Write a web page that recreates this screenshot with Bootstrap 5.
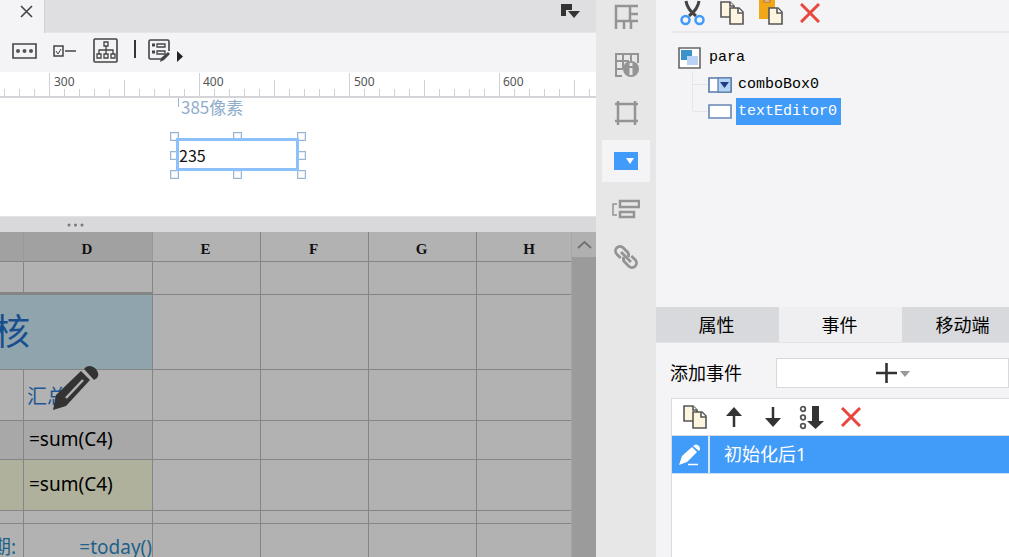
<!DOCTYPE html>
<html lang="zh-CN">
<head>
<meta charset="utf-8">
<meta name="viewport" content="width=device-width, initial-scale=1">
<title>Report designer</title>
<link href="https://cdn.jsdelivr.net/npm/bootstrap@5.3.0/dist/css/bootstrap.min.css" rel="stylesheet">
<style>
  :root { --ink:#333; --panel:#f4f4f6; --accent:#419bf9; --handle:#9ab5d2; }
  body { font-family:"Noto Sans","Noto Sans CJK SC",sans-serif; color:#000; background:var(--panel); }
  button { font:inherit; color:inherit; background:none; border:0; padding:0; }
  svg { display:block; flex:none; }

  /* designer column */
  .doc-tabs, .tools, .ruler, .stage, .splitter { flex:none; }
  .doc-tabs { height:33px; background:#dfdfe1; border-bottom:1px solid #e6e6e8; }
  .doc-tab { width:45px; height:33px; background:var(--panel); border-right:1px solid #d0d0d4; padding:5px 11px 0 0; }
  .tools { height:39px; padding:0 12px; }
  .ruler { height:26px; background:#fff; border-bottom:2px solid #d3d3d8; }
  .ruler-tag { position:absolute; top:1px; font-size:12px; line-height:18px; color:#555; }
  .stage { height:118px; background:#fff; }
  .size-tip { position:absolute; left:178px; top:0; font:17px/17px "Noto Sans CJK SC",sans-serif; color:#8fadca; padding-left:3px; }
  .size-tip::before { content:""; position:absolute; left:0; top:0; width:1px; height:9px; background:var(--handle); }
  .widget { position:absolute; left:176px; top:40px; width:123px; height:33px; }
  .widget input { width:100%; height:100%; border:3px solid #8dc1fb; border-radius:0; padding:0; outline:0; color:#111; background:#fff; font:16px "Noto Sans CJK SC",sans-serif; }
  .grip { position:absolute; width:9px; height:9px; border:1px solid var(--handle); background:#fff; box-shadow:inset 0 0 0 1px #e3ebf4; }
  .g-l { left:-6px; } .g-m { left:57px; } .g-r { right:-7px; }
  .g-t { top:-6px; } .g-c { top:13px; } .g-b { bottom:-8px; }
  .splitter { height:16px; background:#d9d9db; border-top:1px solid #e3e3e5; }
  .splitter svg { margin:6px 0 0 67px; }

  /* spreadsheet */
  .sheet { min-height:0; background:#b2b2b2; }
  .cells { table-layout:fixed; width:100%; border-collapse:separate; border-spacing:0; }
  .cells th, .cells td { padding:0 0 0 5px; border-right:1px solid #858585; border-bottom:1px solid #858585; white-space:nowrap; overflow:hidden; vertical-align:middle; font-size:19px; line-height:24px; }
  .cells th { padding:4px 2px 0 0; text-align:center; font:bold 15px/20px "Liberation Serif",serif; color:#111; }
  .cells th:last-child { padding-left:12px; }
  .cells th:last-child, .cells td:last-child { border-right:0; }
  .cells .on { background:#a1a1a1; border-right-color:#999; }
  .cells td.top-edge { border-bottom:3px solid #858585; padding:0; }
  .cells .headline { background:#8fa4ad; padding:0; }
  .headline div { width:30px; font-size:36px; line-height:48px; color:#174f8e; }
  .cells .gray { background:#a8a8a8; padding-bottom:3px; }
  .cells .olive { background:#b0b19d; padding-bottom:3px; }
  .cells .label-blue { font-size:20px; color:#1f5793; padding:3px 0 0 3px; }
  .cells .foot { color:#1f6188; text-align:right; padding:0; }
  .foot div { width:16px; }
  .pencil { position:absolute; left:52px; top:132px; }
  .scroller { width:25px; flex:none; background:#9b9b9b; border-left:1px solid #a6a6a6; }
  .scroller button { height:25px; width:100%; background:#b0b0b0; }

  /* icon rail */
  .rail { width:60px; flex:none; background:#e7e7e7; overflow:hidden; }
  .rail button { width:48px; height:42px; flex:none; color:#949494; }
  .rail .current { background:var(--panel); }
  .rail div { gap:6px; margin-top:-4px; }

  /* inspector */
  .inspector { flex:0 0 353px; background:var(--panel); overflow:hidden; }
  .tree-pane { height:307px; flex:none; }
  .icon-bar button { width:39px; height:26px; }
  .tree-bar { height:33px; margin-left:15px; padding-left:2px; border-bottom:2px solid #e8e8eb; }
  .tree { margin:11px 0 0 22px; font:15px/27px "Liberation Mono",monospace; }
  .tree li { height:27px; }
  .tree ul { margin-left:14px; }
  .tree ul li::before { content:""; width:15px; height:1px; background:#e6e6e9; }
  .tree ul li { border-left:1px solid #e6e6e9; }
  .tree ul li:last-child { border-image:linear-gradient(#e6e6e9 50%, transparent 50%) 1; }
  .tree ul span { padding:0 4px 0 2px; margin-left:4px; }
  .picked { background:var(--accent); color:#fff; }
  .pane-tabs button { width:123px; height:36px; flex:none; font-size:18px; padding:2px 2px 0 0; background:#d8d9dc; border-bottom:1px solid #e4e4e7; }
  .pane-tabs .current { background:#efeff1; }
  .add-row { padding:15px 0 10px 14px; font-size:18px; }
  .add-btn { height:30px; background:#fff; border:1px solid #d9d9dc; margin-left:34px; padding-left:1px; }
  .events { margin-left:15px; background:#fff; border:solid #dcdcdf; border-width:1px 0 0 1px; }
  .events .icon-bar { height:37px; padding-left:3px; border-bottom:1px solid #dcdcdf; }
  .event-item { height:38px; background:var(--accent); color:#fff; font-size:18px; border-bottom:1px solid #c9dff6; }
  .event-item span { border-right:2px solid #d6e8fc; width:38px; height:37px; }
  .event-item div { padding-left:14px; }
</style>
</head>
<body>
<svg width="0" height="0" class="position-absolute" aria-hidden="true">
  <defs>
    <symbol id="pages" viewBox="0 0 26 26">
      <g fill="#fdf5df" stroke="#555" stroke-width="1.6">
        <path d="M2 2h9l4 4v11H2z"/><path d="M11 2v4h4" fill="#fff"/>
        <path d="M11 8h9l4 4v12H11z"/><path d="M19 8v5h5" fill="#fff"/>
      </g>
    </symbol>
    <symbol id="cross" viewBox="0 0 20 20"><path d="M1 1L19 19M19 1L1 19" stroke="#e8463e" stroke-width="3" fill="none"/></symbol>
  </defs>
</svg>

<div class="d-flex vh-100 overflow-hidden">
  <main class="d-flex flex-column flex-grow-1 overflow-hidden">
    <div class="doc-tabs d-flex justify-content-between align-items-start">
      <div class="doc-tab d-flex justify-content-end align-items-start">
        <button type="button" aria-label="Close tab"><svg width="13" height="13"><path d="M1 1l11 11M12 1L1 12" stroke="#444" stroke-width="1.6"/></svg></button>
      </div>
      <button type="button" class="me-3 pt-1" aria-label="Tab list"><svg width="19" height="16"><path d="M0 0h11v6H5v6H0z" fill="#333"/><path d="M7 7h12l-6 7z" fill="#333"/></svg></button>
    </div>

    <div class="tools d-flex align-items-center">
      <button type="button" aria-label="Text widget"><svg width="25" height="20"><path d="M1 1h23v14H1z" fill="none" stroke="#444" stroke-width="1.6"/><g fill="#555"><circle cx="6" cy="8" r="2"/><circle cx="12.500" cy="8" r="2"/><circle cx="19" cy="8" r="2"/></g></svg></button>
      <button type="button" class="ms-3" aria-label="Check box"><svg width="23" height="16"><path d="M1 1h9v10H1zM12 6h11" fill="none" stroke="#444" stroke-width="1.5"/><path d="M3 6l2 3 3-5" fill="none" stroke="#444"/></svg></button>
      <button type="button" class="ms-3" aria-label="Tree"><svg width="30" height="30"><rect x="2" y="1" width="23" height="23" rx="1" fill="none" stroke="#444" stroke-width="1.6"/><path d="M12 4h4v4h-4zM5 16h4v4H5zM12 16h4v4h-4zM19 16h4v4h-4zM14 8v8M7 16v-4h14v4" fill="none" stroke="#444" stroke-width="1.3"/></svg></button>
      <svg class="ms-2 ps-1" width="6" height="32"><path d="M1 3v18" stroke="#333" stroke-width="2"/></svg>
      <button type="button" class="ms-2 ps-1" aria-label="Edit form"><svg width="36" height="28"><path d="M15 20H2.500q-1.500 0-1.500-1.500V2.500q0-1.500 1.500-1.500h17q1.500 0 1.500 1.500V12" fill="none" stroke="#444" stroke-width="1.6"/><path d="M4 6h3M4 13h3" stroke="#444" stroke-width="3"/><path d="M9 5h8v3H9zM9 12h8v3H9z" fill="none" stroke="#444" stroke-width="1.3"/><path d="M12 23l1-4 7-6 2 2-6 6z" fill="#444"/><path d="M29 12l6 5.500-6 5.500z" fill="#222"/></svg></button>
    </div>

    <div class="ruler position-relative overflow-hidden">
      <svg width="100%" height="24">
        <defs><pattern id="ticks" x="49" width="150" height="24" patternUnits="userSpaceOnUse">
          <path d="M.5 1v23M75.500 8v16M15.500 17v7M30.500 17v7M45.500 17v7M60.500 17v7M90.500 17v7M105.500 17v7M120.500 17v7M135.500 17v7" stroke="#d0d0d6"/>
        </pattern></defs>
        <rect width="100%" height="24" fill="url(#ticks)"/>
      </svg>
      <span class="ruler-tag" style="left:54px">300</span>
      <span class="ruler-tag" style="left:203px">400</span>
      <span class="ruler-tag" style="left:354px">500</span>
      <span class="ruler-tag" style="left:503px">600</span>
    </div>

    <div class="stage position-relative">
      <div class="size-tip">385像素</div>
      <div class="widget">
        <i class="grip g-l g-t"></i><i class="grip g-m g-t"></i><i class="grip g-r g-t"></i>
        <i class="grip g-l g-c"></i><i class="grip g-r g-c"></i>
        <i class="grip g-l g-b"></i><i class="grip g-m g-b"></i><i class="grip g-r g-b"></i>
        <input class="position-relative" type="text" value="235" aria-label="textEditor0">
      </div>
    </div>
    <div class="splitter"><svg width="18" height="4"><g fill="#777"><circle cx="2" cy="2" r="1.500"/><circle cx="8.500" cy="2" r="1.500"/><circle cx="15" cy="2" r="1.500"/></g></svg></div>

    <div class="sheet d-flex flex-grow-1 position-relative overflow-hidden">
      <div class="flex-grow-1 overflow-hidden">
        <table class="cells">
          <colgroup><col style="width:24px"><col style="width:129px"><col style="width:108px"><col style="width:108px"><col style="width:108px"><col></colgroup>
          <thead><tr style="height:30px"><th class="on"></th><th class="on">D</th><th>E</th><th>F</th><th>G</th><th>H</th></tr></thead>
          <tbody>
            <tr style="height:33px"><td class="top-edge"></td><td class="top-edge"></td><td></td><td></td><td></td><td></td></tr>
            <tr style="height:75px"><td class="headline" colspan="2"><div class="d-flex justify-content-end">核</div></td><td></td><td></td><td></td><td></td></tr>
            <tr style="height:51px"><td></td><td class="label-blue">汇总</td><td></td><td></td><td></td><td></td></tr>
            <tr style="height:39px"><td class="gray"></td><td class="gray">=sum(C4)</td><td></td><td></td><td></td><td></td></tr>
            <tr style="height:51px"><td class="olive"></td><td class="olive">=sum(C4)</td><td></td><td></td><td></td><td></td></tr>
            <tr style="height:13px"><td></td><td></td><td></td><td></td><td></td><td></td></tr>
            <tr style="height:46px"><td class="foot"><div class="d-flex justify-content-end">期:</div></td><td class="foot">=today()</td><td></td><td></td><td></td><td></td></tr>
          </tbody>
        </table>
      </div>
      <svg class="pencil" width="48" height="48" viewBox="0 0 48 48"><path d="M1 46l3-15L29 7l9 9-24 26z" fill="#333"/><path d="M14 34L31 16" stroke="#b2b2b2" stroke-width="2.500"/><path d="M32 5l2-2q5-3 10 2 4 5 1 9l-3 2z" fill="#333"/></svg>
      <div class="scroller"><button type="button" class="d-flex align-items-center justify-content-center" aria-label="Scroll up"><svg width="15" height="9"><path d="M1 8l6.500-6L14 8" fill="none" stroke="#707070" stroke-width="1.800"/></svg></button></div>
    </div>
  </main>

  <nav class="rail">
    <div class="d-flex flex-column align-items-center">
      <button type="button" class="d-flex align-items-center justify-content-center" aria-label="Cell element"><svg width="25" height="26"><path d="M2 25V2h22M2 17h22M16 2v15M16 10h8M10 17v8M17 17v8" fill="none" stroke="currentColor" stroke-width="2.500"/></svg></button>
      <button type="button" class="d-flex align-items-center justify-content-center" aria-label="Cell attributes"><svg width="25" height="26"><path d="M8 24H2V2h22v9M2 9h13M2 17h7M9 2v15M17 2v7" fill="none" stroke="currentColor" stroke-width="2"/><circle cx="17" cy="17" r="8" fill="currentColor"/><path d="M17 11v3M17 16v7" stroke="#e7e7e7" stroke-width="3"/></svg></button>
      <button type="button" class="d-flex align-items-center justify-content-center" aria-label="Floating element"><svg width="25" height="26"><path d="M4 1v24M21 1v24M1 4h23M1 21h23" fill="none" stroke="currentColor" stroke-width="2.500"/></svg></button>
      <button type="button" class="current d-flex align-items-center justify-content-center" aria-label="Widget settings"><svg width="24" height="18"><path d="M0 0h24v18H0z" fill="#419bf9"/><path d="M12 6h8l-4 6z" fill="#fff"/></svg></button>
      <button type="button" class="d-flex align-items-center justify-content-center" aria-label="Condition attributes"><svg width="28" height="20"><path d="M5 5H1v11h4" fill="none" stroke="currentColor" stroke-width="1.500"/><path d="M8 2h19v6H8zM8 13h14v5H8z" fill="none" stroke="currentColor" stroke-width="2.500"/></svg></button>
      <button type="button" class="d-flex align-items-center justify-content-center" aria-label="Hyperlink"><svg width="26" height="26" viewBox="-13 -13 26 26"><g transform="rotate(45)" fill="none" stroke="currentColor" stroke-width="2.800"><path d="M-3 4.500H-8.500a4.500 4.500 0 0 1 0-9h6a4.500 4.500 0 0 1 4 3"/><path d="M3-4.500H8.500a4.500 4.500 0 0 1 0 9h-6a4.500 4.500 0 0 1-4-3"/><path d="M-7 0H7"/></g></svg></button>
    </div>
  </nav>

  <aside class="inspector d-flex flex-column">
    <section class="tree-pane">
      <div class="tree-bar icon-bar d-flex align-items-start">
        <button type="button" class="d-flex align-items-center justify-content-center" aria-label="Cut"><svg width="25" height="26"><path d="M6 1q1 8 10 15M19 1q-1 8-10 15" fill="none" stroke="#444" stroke-width="3"/><g fill="none" stroke="#419bf9" stroke-width="2.500"><circle cx="5.500" cy="20" r="4"/><circle cx="19.500" cy="20" r="4"/></g></svg></button>
        <button type="button" class="d-flex align-items-center justify-content-center" aria-label="Copy"><svg width="26" height="26"><use href="#pages"/></svg></button>
        <button type="button" class="d-flex align-items-center justify-content-center" aria-label="Paste"><svg width="26" height="26"><path d="M1 0h16v19H1z" fill="#f0a818"/><path d="M6 0h6v2H6z" fill="#fff" stroke="#b5651d"/><path d="M11 8h9l4 4v12H11z" fill="#fdf5df" stroke="#555" stroke-width="1.600"/><path d="M19 8v5h5" fill="#fff" stroke="#555" stroke-width="1.600"/></svg></button>
        <button type="button" class="d-flex align-items-center justify-content-center" aria-label="Delete"><svg width="20" height="20"><use href="#cross"/></svg></button>
      </div>
      <div class="tree">
        <div class="d-flex align-items-center"><svg width="23" height="22"><path d="M1 1h21v20H1z" fill="#fff" stroke="#666" stroke-width="1.600"/><path d="M3 3h11v10H3z" fill="#3a92cb"/><path d="M9 9h11v9H9z" fill="#b9d2f5"/></svg><span class="ms-2">para</span></div>
        <ul class="list-unstyled mb-0">
          <li class="d-flex align-items-center"><svg width="24" height="16"><path d="M1 1h22v14H1z" fill="#fff" stroke="#5577a8" stroke-width="1.600"/><path d="M10 1h13v14H10z" fill="#b5d3f2" stroke="#5577a8" stroke-width="1.200"/><path d="M12 5h9l-4.500 6z" fill="#1f3c86"/></svg><span>comboBox0</span></li>
          <li class="d-flex align-items-center"><svg width="24" height="16"><path d="M1 1h22v13H1z" fill="#fff" stroke="#6685b5" stroke-width="1.600"/></svg><span class="picked">textEditor0</span></li>
        </ul>
      </div>
    </section>

    <div class="pane-tabs d-flex" role="tablist">
      <button type="button" role="tab">属性</button><button type="button" role="tab" class="current" aria-selected="true">事件</button><button type="button" role="tab">移动端</button>
    </div>
    <div class="add-row d-flex align-items-center">
      <span>添加事件</span>
      <button type="button" class="add-btn flex-grow-1 d-flex align-items-center justify-content-center" aria-label="添加事件"><svg width="34" height="20"><path d="M0 10h21M10.500 0v20" stroke="#333" stroke-width="2.600"/><path d="M24 8h10l-5 6z" fill="#999"/></svg></button>
    </div>
    <div class="events flex-grow-1">
      <div class="icon-bar d-flex align-items-center">
        <button type="button" class="d-flex align-items-center justify-content-center" aria-label="Copy event"><svg width="26" height="26"><use href="#pages"/></svg></button>
        <button type="button" class="d-flex align-items-center justify-content-center" aria-label="Move up"><svg width="16" height="20"><path d="M8 5v15" stroke="#333" stroke-width="2.500"/><path d="M0 9l8-9 8 9z" fill="#333"/></svg></button>
        <button type="button" class="d-flex align-items-center justify-content-center" aria-label="Move down"><svg width="16" height="20"><path d="M8 0v15" stroke="#333" stroke-width="2.500"/><path d="M0 11l8 9 8-9z" fill="#333"/></svg></button>
        <button type="button" class="d-flex align-items-center justify-content-center" aria-label="Move to bottom"><svg width="25" height="25"><g fill="none" stroke="#555" stroke-width="1.800"><circle cx="4" cy="4" r="2.300"/><circle cx="4" cy="12.500" r="2.300"/><circle cx="4" cy="21" r="2.300"/></g><path d="M13 1h7v15h5l-8.500 8L8 16h5z" fill="#333"/></svg></button>
        <button type="button" class="d-flex align-items-center justify-content-center" aria-label="Delete event"><svg width="20" height="20"><use href="#cross"/></svg></button>
      </div>
      <div class="event-item d-flex align-items-center">
        <span class="d-flex align-items-center justify-content-center"><svg width="22" height="22"><path d="M0 21l3-9L13 3l5 5L8 18zM14 2q3-3 6 0 2 3 0 5z" fill="#fff"/><path d="M9 20.500h10" stroke="#fff" stroke-width="1.500"/></svg></span>
        <div>初始化后1</div>
      </div>
    </div>
  </aside>
</div>
<script src="https://cdn.jsdelivr.net/npm/bootstrap@5.3.0/dist/js/bootstrap.bundle.min.js"></script>
</body>
</html>
